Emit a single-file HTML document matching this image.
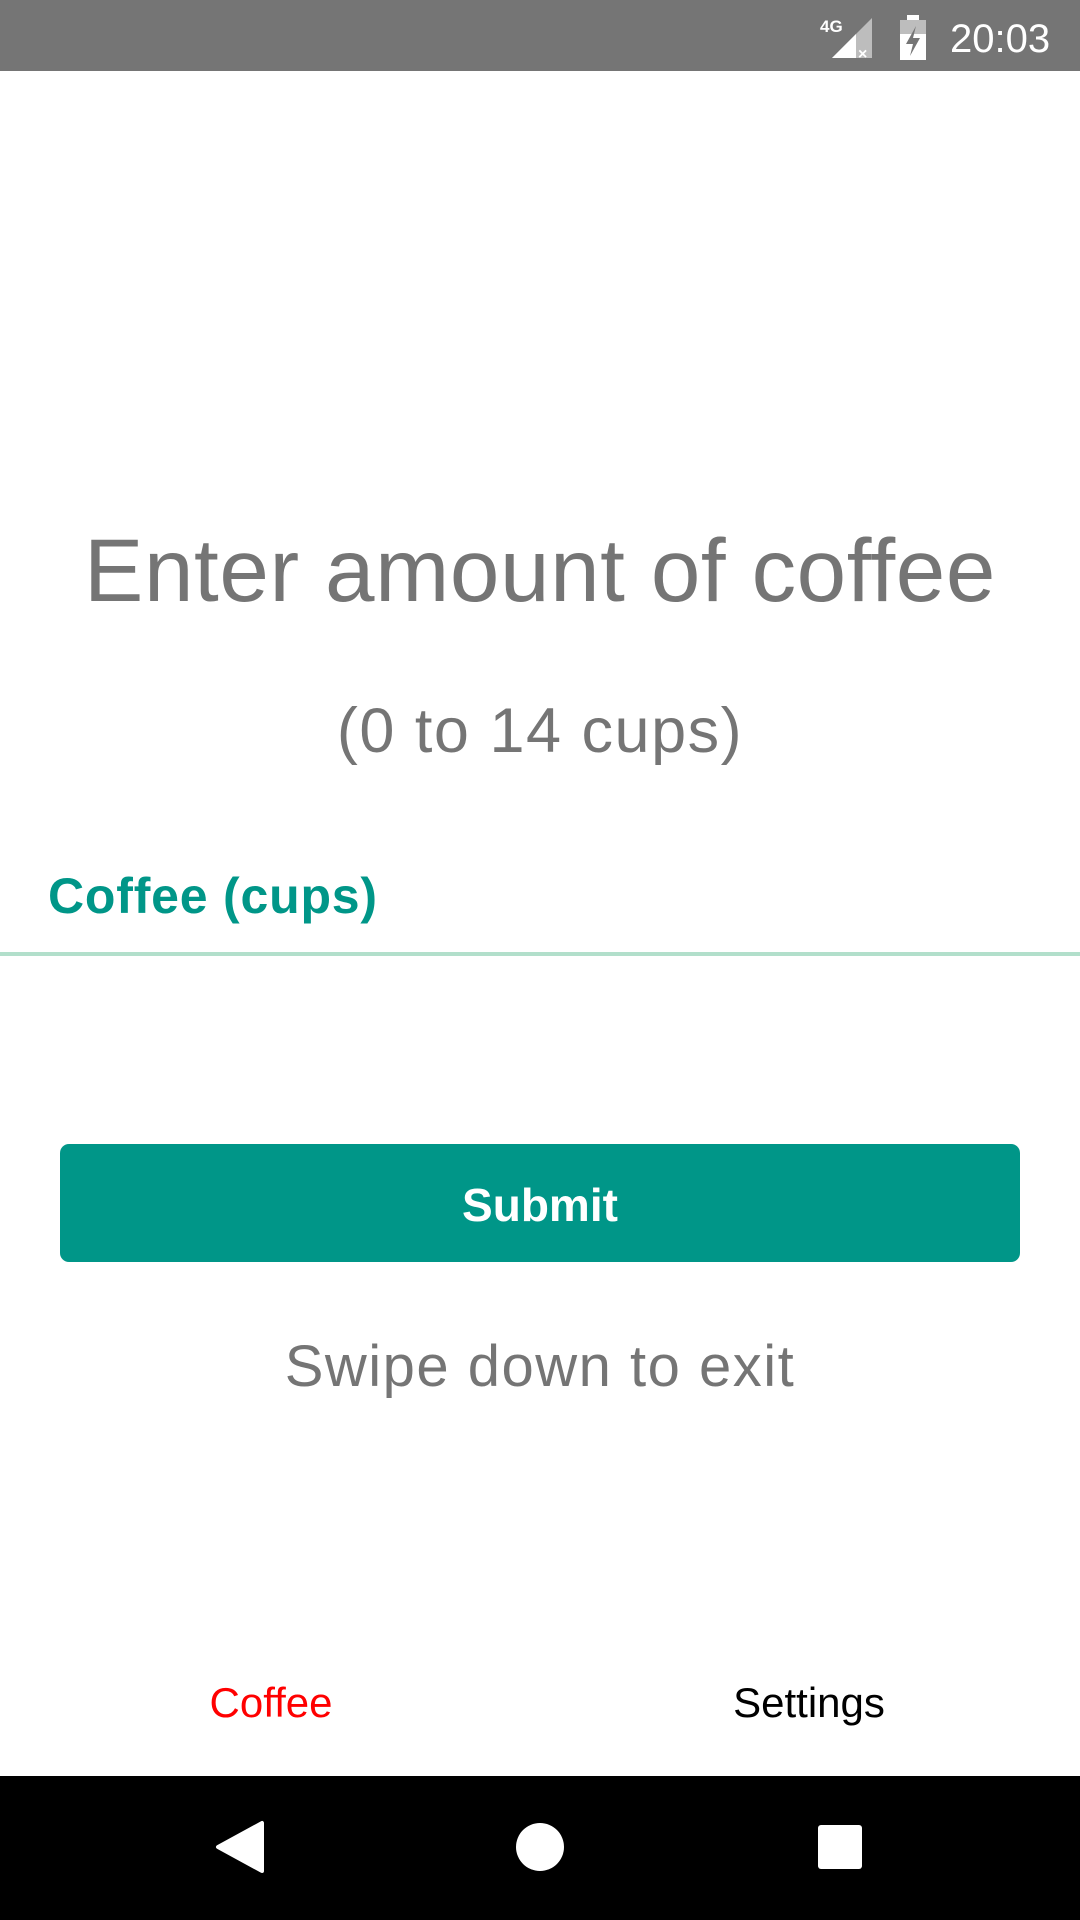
<!DOCTYPE html>
<html><head><meta charset="utf-8"><style>
*{margin:0;padding:0;box-sizing:border-box}
body{width:1080px;height:1920px;background:#fff;position:relative;overflow:hidden;font-family:"Liberation Sans",Roboto,sans-serif}
.abs{position:absolute}
.c{left:0;width:1080px;text-align:center}
</style></head><body>
<div class="abs" style="left:0;top:0;width:1080px;height:71px;background:#757575"></div>
<svg class="abs" style="left:820px;top:12px" width="240" height="50" viewBox="0 0 240 50">
<text x="0" y="20" font-family="Liberation Sans" font-weight="bold" font-size="17" fill="#fff">4G</text>
<polygon points="12,46 52,6 52,46" fill="#bdbdbd"/>
<polygon points="12,46 36,22 36,46" fill="#fff"/>
<text x="38" y="47" font-family="Liberation Sans" font-weight="bold" font-size="16" fill="#fff">×</text>
<rect x="80" y="8" width="26" height="40" fill="#fff"/>
<rect x="87" y="3" width="12" height="6" fill="#fff"/>
<rect x="80" y="8" width="26" height="14" fill="#bdbdbd"/>
<polygon points="96,14 86,32 93,32 90,44 100,26 93,26" fill="#757575"/>
<text x="130" y="40" font-family="Liberation Sans" font-size="40" fill="#fff">20:03</text>
</svg>
<div class="abs c" style="top:515px;font-size:89px;letter-spacing:0.6px;color:#757575;line-height:110px">Enter amount of coffee</div>
<div class="abs c" style="top:694px;font-size:63px;letter-spacing:1.5px;color:#757575;line-height:74px">(0 to 14 cups)</div>
<div class="abs" style="left:48px;top:866px;font-size:50px;letter-spacing:0.8px;font-weight:bold;color:#009688;line-height:60px">Coffee (cups)</div>
<div class="abs" style="left:0;top:952px;width:1080px;height:4px;background:#b2dfcb"></div>
<div class="abs" style="left:60px;top:1144px;width:960px;height:118px;background:#009688;border-radius:9px;color:#fff;font-weight:bold;font-size:46px;text-align:center;line-height:122px">Submit</div>
<div class="abs c" style="top:1333px;font-size:58px;letter-spacing:1.5px;color:#757575;line-height:68px">Swipe down to exit</div>
<div class="abs" style="left:71px;width:400px;text-align:center;top:1678px;font-size:42px;color:#ff0000;line-height:50px">Coffee</div>
<div class="abs" style="left:609px;width:400px;text-align:center;top:1678px;font-size:42px;color:#000;line-height:50px">Settings</div>
<div class="abs" style="left:0;top:1776px;width:1080px;height:144px;background:#000"></div>
<svg class="abs" style="left:0;top:1776px" width="1080" height="144">
<polygon points="218,71 262,47 262,95" fill="#fff" stroke="#fff" stroke-width="4" stroke-linejoin="round"/>
<circle cx="540" cy="71" r="24" fill="#fff"/>
<rect x="818" y="49" width="44" height="44" rx="3" fill="#fff"/>
</svg>
</body></html>
